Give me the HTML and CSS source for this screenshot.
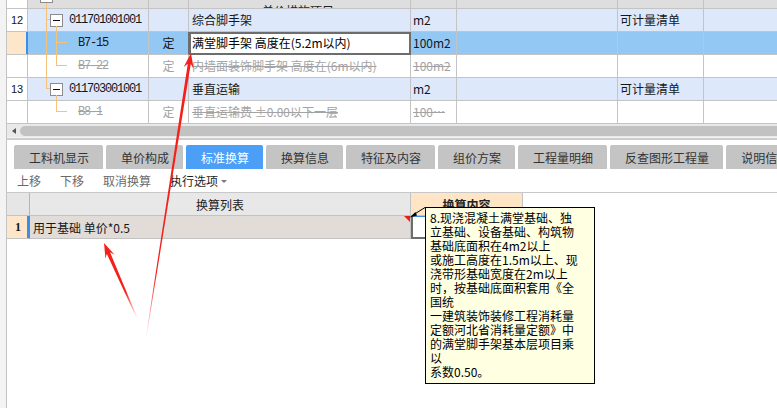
FILE: index.html
```html
<!DOCTYPE html>
<html lang="zh-CN">
<head>
<meta charset="utf-8">
<title>标准换算</title>
<link rel="stylesheet" href="styles.css">
</head>
<body>
<div class="app">
  <div class="gutter"></div>
  <div class="main">
    <div class="grid">
      <div class="row top">
        <div class="c rn"></div>
        <div class="c"></div>
        <div class="c"></div>
        <div class="c name"><span class="cut">单价措施项目</span></div>
        <div class="c"></div>
        <div class="c"></div>
        <div class="c"></div>
        <div class="c last"></div>
      </div>
      <div class="row list">
        <div class="c rn">12</div>
        <div class="c code"><span class="box"><svg width="13" height="13" viewBox="0 0 13 13"><rect x="0.5" y="0.5" width="12" height="12" fill="#fff" stroke="#8c8c8c"/><line x1="3" y1="6.5" x2="10" y2="6.5" stroke="#111"/></svg></span>011701001001</div>
        <div class="c"></div>
        <div class="c name">综合脚手架</div>
        <div class="c unit">m2</div>
        <div class="c"></div>
        <div class="c memo">可计量清单</div>
        <div class="c last"></div>
      </div>
      <div class="row sel">
        <div class="c rn"></div>
        <div class="c code child">B7-15</div>
        <div class="c type">定</div>
        <div class="c name edit">满堂脚手架 高度在(5.2m以内)</div>
        <div class="c unit">100m2</div>
        <div class="c"></div>
        <div class="c"></div>
        <div class="c last"></div>
      </div>
      <div class="row del">
        <div class="c rn"></div>
        <div class="c code child"><s>B7-22</s></div>
        <div class="c type">定</div>
        <div class="c name"><s>内墙面装饰脚手架 高度在(6m以内)</s></div>
        <div class="c unit"><s>100m2</s></div>
        <div class="c"></div>
        <div class="c"></div>
        <div class="c last"></div>
      </div>
      <div class="row list">
        <div class="c rn">13</div>
        <div class="c code"><span class="box"><svg width="13" height="13" viewBox="0 0 13 13"><rect x="0.5" y="0.5" width="12" height="12" fill="#fff" stroke="#8c8c8c"/><line x1="3" y1="6.5" x2="10" y2="6.5" stroke="#111"/></svg></span>011703001001</div>
        <div class="c"></div>
        <div class="c name">垂直运输</div>
        <div class="c unit">m2</div>
        <div class="c"></div>
        <div class="c memo">可计量清单</div>
        <div class="c last"></div>
      </div>
      <div class="row del">
        <div class="c rn"></div>
        <div class="c code child"><s>B8-1</s></div>
        <div class="c type">定</div>
        <div class="c name"><s>垂直运输费 ±0.00以下一层</s></div>
        <div class="c unit"><s>100…</s></div>
        <div class="c"></div>
        <div class="c"></div>
        <div class="c last"></div>
      </div>
      <svg class="tree" width="60" height="124" viewBox="0 0 60 124">
        <g stroke="#f5c27c" stroke-width="1" fill="none" shape-rendering="crispEdges">
          <line x1="39.5" y1="0" x2="39.5" y2="89"/>
          <line x1="39.5" y1="19.5" x2="43" y2="19.5"/>
          <line x1="39.5" y1="88.5" x2="43" y2="88.5"/>
          <line x1="49.5" y1="26" x2="49.5" y2="66"/>
          <line x1="49.5" y1="42.5" x2="66" y2="42.5"/>
          <line x1="49.5" y1="65.5" x2="66" y2="65.5"/>
          <line x1="49.5" y1="95" x2="49.5" y2="112"/>
          <line x1="49.5" y1="111.5" x2="66" y2="111.5"/>
        </g>
        <rect x="33.5" y="-10.5" width="12" height="13" fill="#fff" stroke="#8c8c8c"/>
      </svg>
    </div>

    <div class="hscroll">
      <span class="larrow"></span>
      <span class="thumb"></span>
    </div>
    <div class="splitter"></div>

    <div class="tabs">
      <span class="tab">工料机显示</span>
      <span class="tab">单价构成</span>
      <span class="tab active">标准换算</span>
      <span class="tab">换算信息</span>
      <span class="tab">特征及内容</span>
      <span class="tab">组价方案</span>
      <span class="tab">工程量明细</span>
      <span class="tab">反查图形工程量</span>
      <span class="tab">说明信息</span>
    </div>

    <div class="toolbar">
      <span class="tool dis">上移</span>
      <span class="tool dis">下移</span>
      <span class="tool dis">取消换算</span>
      <span class="tool act">执行选项<i class="caret"></i></span>
    </div>

    <div class="lgrid">
      <div class="lc corner"></div>
      <div class="lc lhead">换算列表</div>
      <div class="lc chead">换算内容</div>
      <div class="lc blank"></div>

      <div class="lc lrn">1</div>
      <div class="lc litem">用于基础 单价*0.5</div>
      <div class="lc ledit"></div>
      <div class="lc blank"></div>
    </div>
    <div class="lbody"></div>
  </div>
</div>

<div class="tip">8.现浇混凝土满堂基础、独<br>立基础、设备基础、构筑物<br>基础底面积在4m2以上<br>或施工高度在1.5m以上、现<br>浇带形基础宽度在2m以上<br>时，按基础底面积套用《全<br>国统<br>一建筑装饰装修工程消耗量<br>定额河北省消耗量定额》中<br>的满堂脚手架基本层项目乘<br>以<br>系数0.50。</div>

<svg class="overlay" width="777" height="408" viewBox="0 0 777 408">
  <defs>
    <linearGradient id="ga" gradientUnits="userSpaceOnUse" x1="146" y1="338" x2="191" y2="53">
      <stop offset="0" stop-color="#f5201a" stop-opacity="0"/>
      <stop offset="0.22" stop-color="#f5201a" stop-opacity="1"/>
      <stop offset="1" stop-color="#f5201a" stop-opacity="1"/>
    </linearGradient>
    <linearGradient id="gb" gradientUnits="userSpaceOnUse" x1="137" y1="318" x2="104" y2="243">
      <stop offset="0" stop-color="#f5201a" stop-opacity="0"/>
      <stop offset="0.35" stop-color="#f5201a" stop-opacity="1"/>
      <stop offset="1" stop-color="#f5201a" stop-opacity="1"/>
    </linearGradient>
  </defs>
  <polygon fill="url(#ga)" points="191,53 193.6,68.6 190.76,64.1 146.3,338.05 145.7,337.95 187.8,63.64 183.72,67.04"/>
  <polygon fill="url(#gb)" points="104,243 114.62,254.72 110.08,252.35 137.37,317.84 136.63,318.16 106.78,253.8 105.46,258.74"/>
  <line x1="425" y1="207.5" x2="413" y2="215" stroke="#000" stroke-width="1"/>
  <polygon points="409.5,217.5 415.5,212 417,215.5" fill="#000"/>
</svg>
</body>
</html>
```

FILE: styles.css
```css
* { box-sizing: border-box; margin: 0; padding: 0; }

html, body {
  width: 777px;
  height: 408px;
  overflow: hidden;
  background: #fff;
}

body {
  position: relative;
  font-family: "Noto Sans CJK SC", "Liberation Sans", sans-serif;
  font-size: 12px;
  color: #161616;
}

.app {
  display: flex;
  height: 408px;
}

.gutter {
  flex: none;
  width: 7px;
  background: #f3f3f3;
  border-right: 1px solid #c4c4c4;
}

.main {
  flex: 1;
  min-width: 0;
  display: flex;
  flex-direction: column;
  overflow: hidden;
}

/* ---------- upper grid ---------- */
.grid {
  position: relative;
  display: grid;
  grid-template-columns: 21px 121px 40px 222px 46px 161px 86px 1fr;
}

.row { display: contents; }

.c {
  height: 23px;
  display: flex;
  align-items: center;
  white-space: nowrap;
  overflow: hidden;
  border-right: 1px solid #c4c4c4;
  border-bottom: 1px solid #c4c4c4;
  line-height: 14px;
}

.c.last { border-right: none; }

.top .c {
  height: 9px;
  background: #dedede;
  align-items: flex-end;
}
.top .rn { background: #fff; }

.cut {
  display: block;
  padding-left: 70px;
  margin-bottom: -10px;
  color: #222;
}

.rn {
  justify-content: center;
  font-family: "Liberation Sans", sans-serif;
  font-size: 11px;
  background: #fff;
}

.list .c { background: #dde9fb; }
.list .rn { background: #fff; }

.sel .c { background: #93c8f5; }
.sel .rn {
  background: #fde6c9;
  border-right-color: #3b8fe8;
  box-shadow: inset -1px 0 0 #3b8fe8;
}
.sel .type { border-right-color: #6d6d6d; }
.list .name { border-bottom-color: #c4c4c4; }

.del .c { background: #fff; color: #a3a3a3; }
.del s { text-decoration: line-through; }

.code {
  padding-left: 22px;
  font-family: "Liberation Mono", "Noto Sans CJK SC", monospace;
  letter-spacing: -1.2px;
}
.code.child { padding-left: 50px; }

.box {
  display: inline-flex;
  margin-right: 6px;
  letter-spacing: 0;
}

.type { justify-content: center; }

.name { padding-left: 3px; }
.sel .name.edit {
  background: #fff;
  color: #000;
  border-right-color: #6d6d6d;
  border-bottom-color: #6d6d6d;
  box-shadow: inset 2px 2px 0 #6d6d6d, inset -1px -1px 0 #6d6d6d;
}

.unit { padding-left: 2px; }
.memo { padding-left: 2px; }

.tree {
  position: absolute;
  left: 0;
  top: 0;
  pointer-events: none;
}

/* ---------- scroll + splitter ---------- */
.hscroll {
  height: 13px;
  background: #e9e9e9;
  display: flex;
  align-items: center;
}

.larrow {
  flex: none;
  width: 0;
  height: 0;
  margin-left: 5px;
  border-top: 3px solid transparent;
  border-bottom: 3px solid transparent;
  border-right: 4px solid #555;
}

.thumb {
  flex: 1;
  height: 10px;
  margin-left: 4px;
  background: #c2c2c2;
  border-radius: 5px 0 0 5px;
}

.splitter {
  height: 3px;
  border-top: 1px solid #f4f4f4;
  background: #cdcdcd;
  margin-bottom: 5px;
}

/* ---------- tabs ---------- */
.tabs {
  display: flex;
  gap: 3px;
  padding-left: 7px;
  height: 24px;
  white-space: nowrap;
  overflow: hidden;
}

.tab {
  flex: none;
  display: flex;
  align-items: center;
  padding: 0 14px 0 15px;
  background: #c4c4c4;
  color: #333;
  border-radius: 2px 2px 0 0;
}

.tab.active {
  background: #4b9ff6;
  color: #fff;
}

/* ---------- toolbar ---------- */
.toolbar {
  height: 23px;
  display: flex;
  align-items: center;
  gap: 19px;
  padding-left: 10px;
}

.tool { display: flex; align-items: center; }
.tool.dis { color: #6a6a6a; }
.tool.act { color: #1e1e1e; }

.caret {
  width: 0;
  height: 0;
  margin-left: 3px;
  margin-top: 2px;
  border-left: 3px solid transparent;
  border-right: 3px solid transparent;
  border-top: 3px solid #7a7a7a;
}

/* ---------- lower grid ---------- */
.lgrid {
  display: grid;
  grid-template-columns: 23px 381px 112px 1fr;
  border-top: 1px solid #c8c8c8;
}

.lc {
  height: 23px;
  display: flex;
  align-items: center;
  white-space: nowrap;
  border-right: 1px solid #c2c2c2;
  border-bottom: 1px solid #c2c2c2;
}

.lc.blank { border: none; background: #fff; }

.corner { background: #e6e6e6; border-right-color: #b5b5b5; }
.lhead {
  background: #e8e8e8;
  justify-content: center;
  color: #222;
}
.chead {
  background: #fde5c6;
  justify-content: center;
  font-weight: bold;
  color: #222;
}

.lrn {
  background: #fde6c9;
  justify-content: center;
  font-family: "Liberation Serif", serif;
  font-weight: bold;
  font-size: 12px;
  border-right-color: #3b8fe8;
  box-shadow: inset -2px 0 0 #3b8fe8;
}

.litem {
  position: relative;
  background: #e1dcd8;
  padding-left: 3px;
  color: #161616;
}

.litem::after {
  content: "";
  position: absolute;
  right: 0;
  top: 0;
  border-top: 6px solid #ee1c1c;
  border-left: 6px solid transparent;
}

.ledit {
  background: #fff;
  border-right-color: #6d6d6d;
  border-bottom-color: #6d6d6d;
  box-shadow: inset 2px 0 0 #6d6d6d, inset 0 1px 0 #3b8fe8, inset 0 -1px 0 #6d6d6d;
}

.lbody { flex: 1; background: #fff; }

/* ---------- tooltip + annotations ---------- */
.tip {
  position: absolute;
  left: 425px;
  top: 207px;
  width: 170px;
  height: 177px;
  padding: 3px 4px;
  background: #ffffe1;
  border: 1px solid #000;
  line-height: 14px;
  font-size: 12px;
  color: #000;
  white-space: nowrap;
  overflow: hidden;
}

.overlay {
  position: absolute;
  left: 0;
  top: 0;
  pointer-events: none;
}
```
